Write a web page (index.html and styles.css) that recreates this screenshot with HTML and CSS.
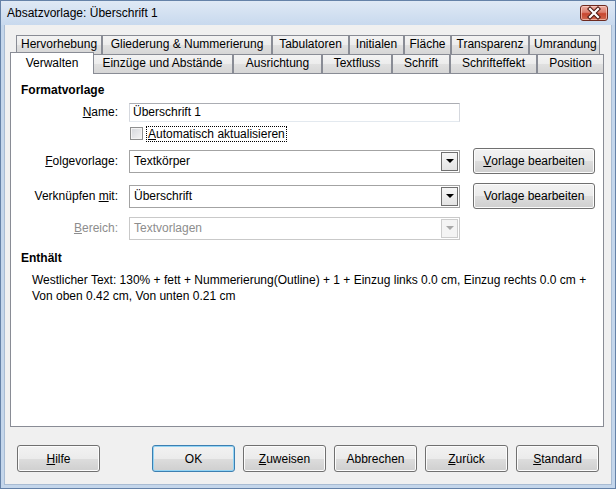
FILE: index.html
```html
<!DOCTYPE html>
<html lang="de">
<head>
<meta charset="utf-8">
<title>Absatzvorlage: Überschrift 1</title>
<link rel="stylesheet" href="styles.css">
</head>
<body>
<div class="window">
  <div class="titlebar">
    <span class="title">Absatzvorlage: Überschrift 1</span>
    <span class="close">
      <svg width="28" height="16" viewBox="0 0 28 16">
        <path d="M10 4 L18 12 M18 4 L10 12" stroke="#4a1810" stroke-width="4.2" stroke-linecap="square" fill="none"/>
        <path d="M10 4 L18 12 M18 4 L10 12" stroke="#ffffff" stroke-width="2.2" stroke-linecap="square" fill="none"/>
      </svg>
    </span>
  </div>
  <div class="client">
    <div class="tabs">
      <div class="tabrow back">
        <div class="tab">Hervorhebung</div>
        <div class="tab">Gliederung &amp; Nummerierung</div>
        <div class="tab">Tabulatoren</div>
        <div class="tab">Initialen</div>
        <div class="tab">Fläche</div>
        <div class="tab">Transparenz</div>
        <div class="tab">Umrandung</div>
      </div>
      <div class="tabrow front">
        <div class="tab sel">Verwalten</div>
        <div class="tab">Einzüge und Abstände</div>
        <div class="tab">Ausrichtung</div>
        <div class="tab">Textfluss</div>
        <div class="tab">Schrift</div>
        <div class="tab">Schrifteffekt</div>
        <div class="tab">Position</div>
      </div>
    </div>
    <div class="panel">
      <div class="heading">Formatvorlage</div>
      <div class="form">
        <div class="label"><u>N</u>ame:</div>
        <div class="field"><div class="textbox">Überschrift 1</div></div>
        <div></div>

        <div></div>
        <div class="field">
          <div class="check"><span class="box"></span><span class="focus"><u>A</u>utomatisch aktualisieren</span></div>
        </div>
        <div></div>

        <div class="label"><u>F</u>olgevorlage:</div>
        <div class="field"><div class="combo"><span class="combo-text">Textkörper</span><span class="combo-btn"></span></div></div>
        <div class="field"><div class="btn wide"><u>V</u>orlage bearbeiten</div></div>

        <div class="label">Verknüpfen <u>m</u>it:</div>
        <div class="field"><div class="combo"><span class="combo-text">Überschrift</span><span class="combo-btn"></span></div></div>
        <div class="field"><div class="btn wide">Vorlage bearbeiten</div></div>

        <div class="label disabled"><u>B</u>ereich:</div>
        <div class="field"><div class="combo off"><span class="combo-text">Textvorlagen</span><span class="combo-btn"></span></div></div>
        <div></div>
      </div>
      <div class="heading contains">Enthält</div>
      <div class="desc">Westlicher Text: 130% + fett + Nummerierung(Outline) + 1 + Einzug links 0.0 cm, Einzug rechts 0.0 cm +<br>Von oben 0.42 cm, Von unten 0.21 cm</div>
    </div>
    <div class="footer">
      <div class="btn"><u>H</u>ilfe</div>
      <div class="group">
        <div class="btn default">OK</div>
        <div class="btn"><u>Z</u>uweisen</div>
        <div class="btn">Abbrechen</div>
        <div class="btn"><u>Z</u>urück</div>
        <div class="btn"><u>S</u>tandard</div>
      </div>
    </div>
  </div>
</div>
</body>
</html>
```

FILE: styles.css
```css
* { box-sizing: border-box; }

html, body {
  margin: 0;
  padding: 0;
  background: #ffffff;
}

body {
  font-family: "Liberation Sans", Arial, sans-serif;
  font-size: 12px;
  line-height: 16px;
  color: #000;
}

u { text-decoration: underline; text-underline-offset: 1px; }

.window {
  width: 616px;
  height: 489px;
  border: 1px solid #6582a8;
  background: #c4d6eb;
  display: flex;
  flex-direction: column;
  padding: 0 3px 3px 3px;
}

.titlebar {
  height: 24px;
  margin: 0 -3px;
  padding: 0 7px 0 6px;
  display: flex;
  align-items: center;
  justify-content: space-between;
  background: linear-gradient(#dfe9f5, #c8d9ee);
}

.title {
  font-size: 12px;
  color: #000;
}

.close {
  width: 28px;
  height: 16px;
  display: block;
  border: 1px solid #6e2a20;
  border-radius: 3px;
  background: linear-gradient(#ecada2 0%, #dc7f6f 45%, #c8462f 55%, #cf6a52 100%);
  box-shadow: inset 0 0 0 1px rgba(255, 220, 210, 0.6);
  overflow: hidden;
}
.close svg { display: block; margin: -1px; }

.client {
  flex: 1;
  background: #f0f0f0;
  display: flex;
  flex-direction: column;
  border: 1px solid #a9bcd3;
  border-top: 0;
}

.tabs {
  margin: 10px 7px 0 5px;
}

.tabrow {
  display: flex;
  height: 19px;
}

.tabrow.back { padding: 0 4px 0 6px; }
.tabrow.front { padding: 0 0 0 2px; }

.tab {
  flex: 1 1 auto;
  height: 19px;
  padding: 0 4px;
  border: 1px solid #898c95;
  border-bottom: 0;
  background: linear-gradient(#f3f3f3 0%, #ececec 50%, #e0e0e0 51%, #d6d6d6 100%);
  text-align: center;
  line-height: 17px;
  white-space: nowrap;
  overflow: hidden;
}

/* tab widths of the reference layout */
.back .tab:nth-child(1) { flex: 0 0 86px; }
.back .tab:nth-child(2) { flex: 0 0 170px; }
.back .tab:nth-child(3) { flex: 0 0 77px; }
.back .tab:nth-child(4) { flex: 0 0 55px; }
.back .tab:nth-child(5) { flex: 0 0 47px; }
.back .tab:nth-child(6) { flex: 0 0 78px; }
.back .tab:nth-child(7) { flex: 1 1 auto; }

.front .tab:nth-child(2) { flex: 0 0 141px; }
.front .tab:nth-child(3) { flex: 0 0 89px; }
.front .tab:nth-child(4) { flex: 0 0 70px; }
.front .tab:nth-child(5) { flex: 0 0 58px; }
.front .tab:nth-child(6) { flex: 0 0 87px; }
.front .tab:nth-child(7) { flex: 1 1 auto; }

.tab.sel {
  flex: 0 0 84px;
  height: 22px;
  margin: -2px -2px 0 -2px;
  line-height: 20px;
  background: #ffffff;
  position: relative;
  z-index: 1;
}

.panel {
  flex: 1;
  margin: 0 7px 0 5px;
  border: 1px solid #898c95;
  background: #ffffff;
  padding: 8px 0 0 10px;
}

.heading {
  font-weight: bold;
}

.form {
  margin-top: 3px;
  display: grid;
  grid-template-columns: 108px 344px 122px;
  grid-template-rows: 22px 21px 34px 36px 28px;
  align-items: center;
}

.label {
  text-align: right;
  padding-right: 11px;
  white-space: nowrap;
}
.label.disabled { color: #8d8d8d; }

.field { display: flex; align-items: center; }

.textbox {
  width: 331px;
  height: 19px;
  border: 1px solid #abadb3;
  border-color: #abadb3 #d5d8de #e3e9ef #d5d8de;
  padding: 0 3px;
  line-height: 17px;
  background: #fff;
}

.check {
  display: flex;
  align-items: center;
  margin-left: 1px;
}

.box {
  width: 13px;
  height: 13px;
  border: 1px solid #8e8f8f;
  background: linear-gradient(135deg, #d4d7dc, #f5f5f5);
  box-shadow: inset 0 0 0 1px #f4f4f4;
  margin-right: 3px;
}

.focus {
  border: 1px dotted #000;
  padding: 0 1px;
  line-height: 14px;
  white-space: nowrap;
}

.combo {
  width: 331px;
  height: 23px;
  border: 1px solid #a3a3a3;
  background: #fff;
  display: flex;
  align-items: center;
  padding: 1px;
}

.combo-text {
  flex: 1;
  padding-left: 3px;
  line-height: 16px;
}

.combo-btn {
  width: 17px;
  height: 19px;
  border: 1px solid #707070;
  background: linear-gradient(#f6f6f6, #e4e4e4);
  display: flex;
  align-items: center;
  justify-content: center;
}
.combo-btn::after {
  content: "";
  width: 0;
  height: 0;
  border-left: 4px solid transparent;
  border-right: 4px solid transparent;
  border-top: 4px solid #000;
}

.combo.off { border-color: #c9c9c9; }
.combo.off .combo-text { color: #8d8d8d; }
.combo.off .combo-btn { border-color: #cdcdcd; background: #f4f4f4; }
.combo.off .combo-btn::after { border-top-color: #a8a8a8; }

.btn {
  width: 83px;
  height: 27px;
  border: 1px solid #707070;
  border-radius: 3px;
  background: linear-gradient(#f2f2f2 0%, #ebebeb 50%, #dddddd 51%, #cfcfcf 100%);
  box-shadow: inset 0 0 0 1px #fcfcfc;
  display: flex;
  align-items: center;
  justify-content: center;
  white-space: nowrap;
}

.btn.wide {
  width: 122px;
  height: 26px;
}

.btn.default {
  border-color: #3c7fb1;
  box-shadow: inset 0 0 0 1px #94d4f4;
}

.contains { margin-top: 8px; }

.desc {
  margin-top: 6px;
  padding-left: 11px;
  white-space: nowrap;
}

.footer {
  display: flex;
  justify-content: space-between;
  padding: 18px 12px 12px 12px;
}

.group {
  display: flex;
  gap: 8px;
}
```
